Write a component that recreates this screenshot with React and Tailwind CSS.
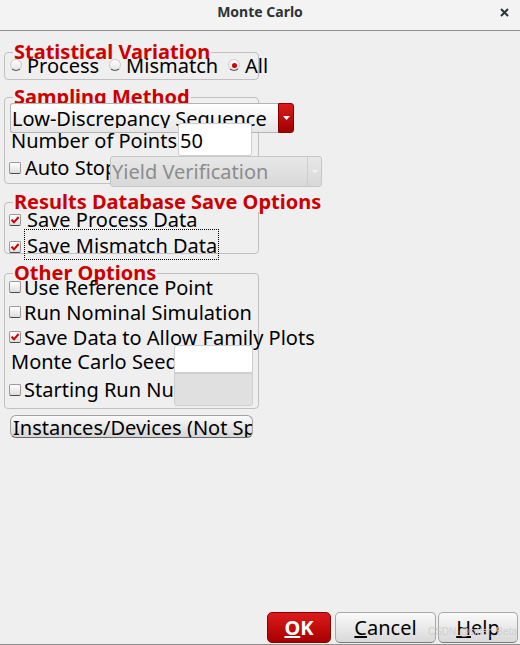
import React from 'react'

function Check({ checked, className = '' }) {
  return (
    <span className={`block h-[12px] w-[12px] shrink-0 rounded-[2px] border border-[#9a9a9a] border-b-[#4a4a4a] bg-linear-to-b from-white to-[#dedede] ${className}`}>
      {checked && (
        <svg width="10" height="10" viewBox="0 0 10 10" className="block">
          <path d="M1.5 4.8L4 7.3L8.6 2" fill="none" stroke="#cc0000" strokeWidth="2" />
        </svg>
      )}
    </span>
  )
}

function Radio({ on, className = '' }) {
  return (
    <span className={`mt-[2px] flex h-[12px] w-[12px] shrink-0 items-center justify-center rounded-full border border-[#cfcfcf] border-b-[#555] bg-linear-to-b from-white to-[#e4e4e4] ${className}`}>
      {on && <span className="h-[5px] w-[5px] rounded-full bg-[#d00000]" />}
    </span>
  )
}

function GroupBox({ title, className = '', children }) {
  return (
    <div className={`relative ml-[4px] w-[255px] shrink-0 rounded-[4px] border border-[#c0c0c0] ${className}`}>
      <span className="absolute -top-[11px] left-[8px] whitespace-nowrap bg-[#efefef] px-[1px] text-[20px] font-bold leading-[20px] text-[#cc0000]">
        {title}
      </span>
      {children}
    </div>
  )
}

export default function App() {
  return (
    <div className="flex h-[645px] w-[520px] flex-col overflow-hidden border-b border-[#8f8f8f] bg-[#efefef] font-['Noto_Sans',sans-serif] text-[20px] leading-[17px] text-black">
      {/* title bar */}
      <div className="grid h-[31px] shrink-0 grid-cols-[1fr_auto_1fr] border-b border-[#8e8e8e] bg-[#f3f3f3] text-[#2e3436]">
        <div />
        <div className="pt-[2px] text-[14px] font-bold leading-[20px]">Monte Carlo</div>
        <div className="flex justify-end pr-[11px] pt-[8px]">
          <svg width="9" height="9" viewBox="0 0 9 9">
            <path d="M1 1L8 8M8 1L1 8" stroke="#2e3436" strokeWidth="2" />
          </svg>
        </div>
      </div>

      <GroupBox title="Statistical Variation" className="mt-[21px] h-[28px]">
        <div className="relative mt-[4px] flex h-[20px] items-start whitespace-nowrap pl-[5px]">
          <Radio />
          <span className="ml-[5px]">Process</span>
          <Radio className="ml-[10px]" />
          <span className="ml-[5px]">Mismatch</span>
          <Radio on className="ml-[10px]" />
          <span className="ml-[5px]">All</span>
        </div>
      </GroupBox>

      <GroupBox title="Sampling Method" className="mt-[17px] h-[87px]">
        <div className="relative ml-[5px] mt-[5px] flex h-[30px] w-[284px]">
          <div className="h-full flex-1 overflow-hidden rounded-l-[3px] border border-r-0 border-[#b4b4b4] bg-linear-to-b from-white to-[#e6e6e6]">
            <div className="h-[24px] overflow-hidden whitespace-nowrap pl-[1px] pt-[6px]">Low-Discrepancy Sequence</div>
          </div>
          <div className="flex h-full w-[16px] items-center justify-center rounded-r-[3px] border border-[#8a0000] bg-linear-to-b from-[#dd1a1a] to-[#a00000]">
            <svg width="7" height="4" viewBox="0 0 7 4">
              <path d="M0 0H7L3.5 4Z" fill="white" />
            </svg>
          </div>
        </div>
        <div className="relative -mt-[10px] flex h-[33px]">
          <span className="ml-[6px] w-[167px] shrink-0 whitespace-nowrap pt-[9px]">Number of Points</span>
          <div className="h-[33px] w-[74px] shrink-0 rounded-[3px] border border-[#cfcfcf] bg-white pl-[1px] pt-[8px]">50</div>
        </div>
        <div className="relative flex h-[31px]">
          <Check className="ml-[4px] mt-[6px]" />
          <span className="ml-[4px] mt-[3px] w-[85px] shrink-0 whitespace-nowrap">Auto Stop</span>
          <div className="flex h-[31px] w-[212px] shrink-0 rounded-[3px] border border-[#c6c6c6] bg-linear-to-b from-[#e8e8e8] to-[#d8d8d8] text-[#8c8c8c]">
            <span className="flex-1 whitespace-nowrap pl-[1px] pt-[6px]">Yield Verification</span>
            <div className="flex w-[14px] items-center justify-center border-l border-[#cdcdcd]">
              <svg width="6" height="3" viewBox="0 0 6 3">
                <path d="M0 0H6L3 3Z" fill="#f4f4f4" />
              </svg>
            </div>
          </div>
        </div>
      </GroupBox>

      <GroupBox title="Results Database Save Options" className="mt-[18px] h-[52px]">
        <div className="relative mt-[8px] flex h-[20px]">
          <Check checked className="ml-[4px] mt-[3px]" />
          <span className="ml-[6px] whitespace-nowrap">Save Process Data</span>
        </div>
        <div className="relative -mt-[2px] flex h-[31px]">
          <Check checked className="ml-[4px] mt-[12px]" />
          <span className="ml-[3px] h-[31px] w-[195px] shrink-0 whitespace-nowrap border border-dotted border-black pl-[2px] pt-[7px]">
            Save Mismatch Data
          </span>
        </div>
      </GroupBox>

      <GroupBox title="Other Options" className="mt-[19px] h-[136px]">
        <div className="relative mt-[5px] flex h-[25px]">
          <Check className="ml-[4px] mt-[2px]" />
          <span className="ml-[3px] whitespace-nowrap">Use Reference Point</span>
        </div>
        <div className="relative flex h-[25px]">
          <Check className="ml-[4px] mt-[2px]" />
          <span className="ml-[3px] whitespace-nowrap">Run Nominal Simulation</span>
        </div>
        <div className="relative flex h-[16px]">
          <Check checked className="ml-[4px] mt-[2px]" />
          <span className="ml-[3px] whitespace-nowrap">Save Data to Allow Family Plots</span>
        </div>
        <div className="relative flex h-[28px]">
          <span className="ml-[6px] w-[163px] shrink-0 whitespace-nowrap pt-[8px]">Monte Carlo Seed</span>
          <div className="h-[28px] w-[79px] shrink-0 rounded-t-[3px] border border-[#cfcfcf] bg-white" />
        </div>
        <div className="relative flex h-[33px]">
          <Check className="ml-[4px] mt-[11px]" />
          <span className="ml-[3px] mt-[8px] w-[150px] shrink-0 whitespace-nowrap">Starting Run Number</span>
          <div className="h-[33px] w-[79px] shrink-0 rounded-b-[3px] border border-[#cfcfcf] bg-[#e0e0e0]" />
        </div>
      </GroupBox>

      <div className="ml-[10px] mt-[6px] h-[23px] w-[243px] shrink-0 overflow-hidden whitespace-nowrap rounded-[6px] border border-[#a0a0a0] border-b-[#6a6a6a] bg-linear-to-b from-[#fbfbfb] to-[#d6d6d6] pl-[2px] pt-[3px]">
        Instances/Devices (Not Specified)
      </div>

      {/* dialog buttons */}
      <div className="relative mb-[1px] mt-auto flex h-[31px] justify-end pr-[2px]">
        <button className="flex h-[31px] w-[64px] items-center justify-center rounded-[5px] border border-[#8a0000] bg-linear-to-b from-[#dd1a1a] to-[#a80000] font-bold text-white">
          <span className="underline">O</span>K
        </button>
        <button className="ml-[4px] flex h-[31px] w-[101px] items-center justify-center rounded-[5px] border border-[#a8a8a8] border-b-[#7a7a7a] bg-linear-to-b from-[#fafafa] to-[#d9d9d9]">
          <span className="underline">C</span>ancel
        </button>
        <button className="ml-[2px] flex h-[31px] w-[80px] items-center justify-center rounded-[5px] border border-[#a8a8a8] border-b-[#7a7a7a] bg-linear-to-b from-[#fafafa] to-[#d9d9d9]">
          <span className="underline">H</span>elp
        </button>
        <span className="absolute right-[3px] top-[14px] font-['Liberation_Sans',sans-serif] text-[10px] leading-[12px] text-[#cfcfcf]">
          CSDN @sitter_Beta
        </span>
      </div>
    </div>
  )
}
